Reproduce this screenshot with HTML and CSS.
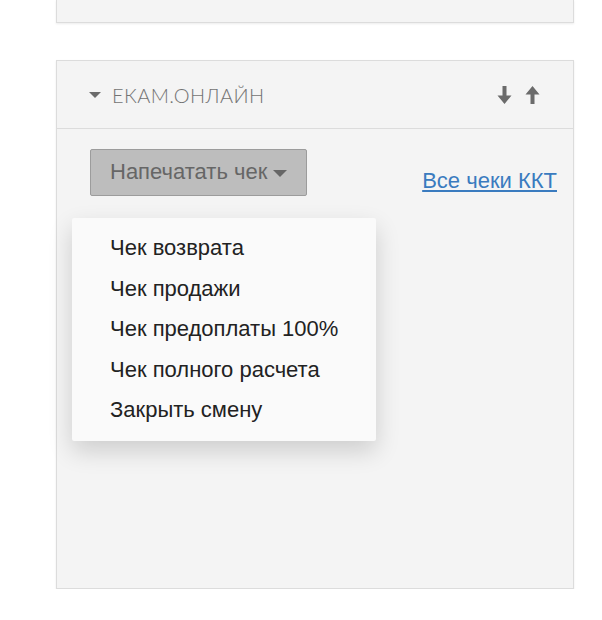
FILE: index.html
```html
<!DOCTYPE html>
<html lang="ru">
<head>
<meta charset="utf-8">
<title>ЕКАМ.ОНЛАЙН</title>
<link rel="stylesheet" href="styles.css">
</head>
<body>
<div class="page">
  <div class="panel panel-top"></div>
  <div class="panel panel-main">
    <div class="panel-head">
      <span class="caret-small"></span>
      <span class="title">ЕКАМ.ОНЛАЙН</span>
      <span class="arrows">
        <svg class="arrow" width="15" height="18" viewBox="0 0 15 18"><path d="M5.5 0h4v9.5h5L7.5 18L0.5 9.5h5z" fill="#6b6b6b"/></svg>
        <svg class="arrow" width="15" height="18" viewBox="0 0 15 18"><path d="M5.5 18h4V8.5h5L7.5 0L0.5 8.5h5z" fill="#6b6b6b"/></svg>
      </span>
    </div>
    <div class="panel-body">
      <div class="actions">
        <div class="dropdown">
          <button class="btn">Напечатать чек<span class="caret"></span></button>
          <ul class="menu">
            <li>Чек возврата</li>
            <li>Чек продажи</li>
            <li>Чек предоплаты 100%</li>
            <li>Чек полного расчета</li>
            <li>Закрыть смену</li>
          </ul>
        </div>
        <a class="link" href="#">Все чеки ККТ</a>
      </div>
    </div>
  </div>
</div>
</body>
</html>
```
FILE: styles.css
```css
html, body {
  margin: 0;
  padding: 0;
  background: #ffffff;
}
.page {
  padding-left: 56px;
  width: 518px;
  font-family: "Liberation Sans", Arial, sans-serif;
}
.panel {
  box-sizing: border-box;
  background: #f4f4f4;
  border: 1px solid #dcdcdc;
  box-shadow: 0 1px 2px rgba(0, 0, 0, 0.08);
}
.panel-top {
  height: 23px;
  border-top: none;
}
.panel-main {
  margin-top: 37px;
}
.panel-head {
  height: 68px;
  box-sizing: border-box;
  border-bottom: 1px solid #dcdcdc;
  display: flex;
  align-items: center;
  padding: 0 33px 0 32px;
}
.caret-small {
  width: 0;
  height: 0;
  border-left: 6px solid transparent;
  border-right: 6px solid transparent;
  border-top: 6px solid #6b6b6b;
  margin-right: 11px;
  margin-top: 1px;
}
.title {
  font-family: Lato, "Liberation Sans", sans-serif;
  font-weight: 300;
  font-size: 20px;
  letter-spacing: 0.4px;
  color: #737373;
  flex: 1;
}
.arrows {
  display: flex;
  gap: 13px;
  align-items: center;
}
.arrow {
  display: block;
}
.panel-body {
  box-sizing: border-box;
  height: 459px;
  padding: 20px 16px 0 33px;
}
.actions {
  display: flex;
  justify-content: space-between;
  align-items: flex-end;
}
.dropdown {
  position: relative;
}
.btn {
  box-sizing: border-box;
  width: 217px;
  height: 47px;
  background: #bdbdbd;
  border: 1px solid #9c9c9c;
  border-radius: 2px;
  color: #666666;
  font-family: "Liberation Sans", Arial, sans-serif;
  font-size: 22px;
  padding: 0 0 2px 19px;
  display: flex;
  align-items: center;
  cursor: pointer;
}
.caret {
  width: 0;
  height: 0;
  border-left: 7px solid transparent;
  border-right: 7px solid transparent;
  border-top: 7px solid #666666;
  margin-left: 6px;
  margin-top: 3px;
}
.menu {
  position: absolute;
  left: -18px;
  top: 69px;
  width: 304px;
  margin: 0;
  padding: 10px 0;
  list-style: none;
  background: #fafafa;
  border-radius: 2px;
  box-shadow: 0 10px 24px rgba(0, 0, 0, 0.16);
}
.menu li {
  height: 40.6px;
  line-height: 40.6px;
  padding-left: 38px;
  font-size: 22px;
  color: #222222;
}
.link {
  font-size: 22px;
  color: #3a7bbf;
  text-decoration: underline;
  margin-bottom: 2px;
}
```
